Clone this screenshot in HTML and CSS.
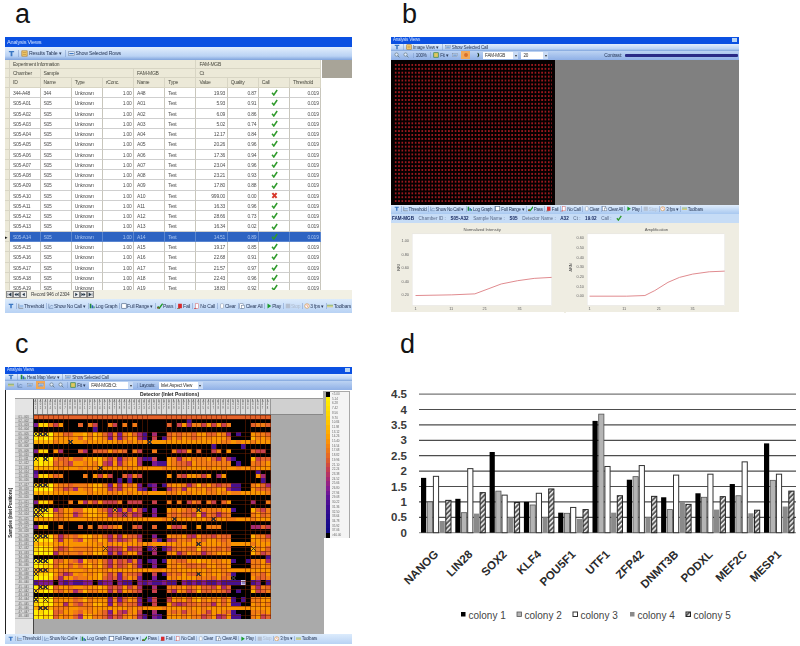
FILE: index.html
```html
<!DOCTYPE html>
<html lang="en">
<head>
<meta charset="utf-8">
<title>Figure panels</title>
<link rel="stylesheet" href="styles.css">
</head>
<body>
<svg class="defs" aria-hidden="true">
  <symbol id="i-t" viewBox="0 0 8 8"><path d="M1 1h6v1.6H5V7H3V2.6H1z" fill="#3b78c4"/></symbol>
  <symbol id="i-doc" viewBox="0 0 8 8"><rect x="1" y="1" width="6" height="6" fill="#f3d27a" stroke="#a86c18" stroke-width=".7"/><path d="M2 3h4M2 5h4" stroke="#a86c18" stroke-width=".6"/></symbol>
  <symbol id="i-show" viewBox="0 0 8 8"><rect x=".5" y="2" width="7" height="4" fill="#e8eef8" stroke="#6a7f9c" stroke-width=".6"/><rect x="1.5" y="3.4" width="5" height="1.4" fill="#3b78c4"/></symbol>
  <symbol id="i-thr" viewBox="0 0 8 8"><path d="M1 7V1M1 7h6" stroke="#555" stroke-width=".7" fill="none"/><path d="M2 4h5" stroke="#3b78c4" stroke-width=".8"/></symbol>
  <symbol id="i-nc" viewBox="0 0 8 8"><path d="M1 7V1M1 7h6" stroke="#4a6a98" stroke-width=".7" fill="none"/><path d="M2 6l2-3 3 1" stroke="#4a6a98" stroke-width=".6" fill="none"/></symbol>
  <symbol id="i-log" viewBox="0 0 8 8"><rect x="1" y="1" width="2.2" height="6" fill="#1f8a3c"/><rect x="3.6" y="3" width="2" height="4" fill="#2a62c0"/><rect x="6" y="4.5" width="1.4" height="2.5" fill="#1f8a3c"/></symbol>
  <symbol id="i-full" viewBox="0 0 8 8"><rect x="1" y="1" width="6" height="6" fill="#fff" stroke="#44597a" stroke-width=".8"/></symbol>
  <symbol id="i-pass" viewBox="0 0 8 8"><path d="M1 4.5L3 7l4.5-6" stroke="#1d9a22" stroke-width="1.8" fill="none"/><rect x="0" y="5.4" width="3" height="2" fill="#7a5a30"/></symbol>
  <symbol id="i-fail" viewBox="0 0 8 8"><rect x="1.5" y="1" width="5" height="6" fill="#d8282a"/><path d="M0 7.5h4" stroke="#7a5a30" stroke-width="1"/></symbol>
  <symbol id="i-nocall" viewBox="0 0 8 8"><rect x="2" y="1" width="4" height="6" fill="#fff" stroke="#d86a6a" stroke-width=".7"/><path d="M0 7.5h3" stroke="#c8302a" stroke-width="1"/></symbol>
  <symbol id="i-clear" viewBox="0 0 8 8"><rect x="2" y="1" width="4" height="6" rx="1" fill="#fff" stroke="#8a97aa" stroke-width=".7"/></symbol>
  <symbol id="i-clearall" viewBox="0 0 8 8"><rect x="1" y="1" width="4.5" height="6" fill="#fff" stroke="#6c7d95" stroke-width=".7"/><rect x="3.4" y="3" width="3.6" height="4" fill="#fff" stroke="#6c7d95" stroke-width=".7"/></symbol>
  <symbol id="i-play" viewBox="0 0 8 8"><path d="M2 .8L7 4 2 7.2z" fill="#1a9c2a"/></symbol>
  <symbol id="i-stop" viewBox="0 0 8 8"><rect x="1" y="1" width="6" height="6" fill="#b4bfd0"/></symbol>
  <symbol id="i-fps" viewBox="0 0 8 8"><circle cx="4" cy="4" r="3" fill="#fff" stroke="#d4862c" stroke-width=".8"/><path d="M4 2v2l1.4 1" stroke="#c8302a" stroke-width=".6" fill="none"/></symbol>
  <symbol id="i-bars" viewBox="0 0 8 8"><path d="M0 3h8" stroke="#8fb04a" stroke-width="1.2"/><path d="M0 5h8" stroke="#d8c860" stroke-width="1.2"/></symbol>
  <symbol id="i-check" viewBox="0 0 10 10"><path d="M1.5 5.4L4 8.5 8.8 1.4" stroke="#2f9a2c" stroke-width="2.2" fill="none"/></symbol>
  <symbol id="i-x" viewBox="0 0 10 10"><path d="M2 1.5l6 7M8 1.5l-6 7" stroke="#d8382a" stroke-width="2.8" fill="none"/></symbol>
  <symbol id="i-zoom" viewBox="0 0 8 8"><circle cx="3.4" cy="3.4" r="2.2" fill="#dfeafa" stroke="#566" stroke-width=".7"/><path d="M5 5l2.2 2.2" stroke="#566" stroke-width=".9"/></symbol>
  <symbol id="i-fit" viewBox="0 0 8 8"><rect x="1" y="1" width="6" height="6" fill="#e0c860" stroke="#2f7f3c" stroke-width=".9"/></symbol>
  <symbol id="i-sun" viewBox="0 0 8 8"><circle cx="4" cy="4" r="2.6" fill="#d8702a"/></symbol>
  <symbol id="i-moon" viewBox="0 0 8 8"><path d="M4 1a3 3 0 1 1 0 6 4 4 0 0 0 0-6z" fill="#1c3a20"/></symbol>
  <symbol id="i-first" viewBox="0 0 6 6"><path d="M1 1v4M5 1L2 3l3 2z" stroke="#234" stroke-width=".5" fill="#234"/></symbol>
  <symbol id="i-prev2" viewBox="0 0 6 6"><path d="M3 1L.5 3 3 5zM5.5 1L3 3l2.5 2z" fill="#234"/></symbol>
  <symbol id="i-prev" viewBox="0 0 6 6"><path d="M4.5 1L1.5 3l3 2z" fill="#234"/></symbol>
  <symbol id="i-next" viewBox="0 0 6 6"><path d="M1.5 1l3 2-3 2z" fill="#234"/></symbol>
  <symbol id="i-next2" viewBox="0 0 6 6"><path d="M.5 1L3 3 .5 5zM3 1l2.5 2L3 5z" fill="#234"/></symbol>
  <symbol id="i-last" viewBox="0 0 6 6"><path d="M5 1v4M1 1l3 2-3 2z" stroke="#234" stroke-width=".5" fill="#234"/></symbol>
</svg>

<main class="figure">
  <section class="panel panel-a">
    <div class="letter letter-a">a</div>
    <div class="win win-a">
      <div class="title"><span>Analysis Views</span></div>
      <div class="bar bar-top">
        <svg class="ico"><use href="#i-t"/></svg>
        <span class="tool"><svg class="ico"><use href="#i-doc"/></svg>Results Table ▾</span>
        <span class="tool"><svg class="ico"><use href="#i-show"/></svg>Show Selected Rows</span>
      </div>
      <div class="sheet-wrap">
        <div class="sheet" id="sheet"></div>
        <div class="sheet-side"></div>
      </div>
      <div class="nav">
        <svg class="navbtn"><use href="#i-first"/></svg><svg class="navbtn"><use href="#i-prev2"/></svg><svg class="navbtn"><use href="#i-prev"/></svg>
        <span class="navtext">Record 946 of 2304</span>
        <svg class="navbtn"><use href="#i-next"/></svg><svg class="navbtn"><use href="#i-next2"/></svg><svg class="navbtn"><use href="#i-last"/></svg>
      </div>
      <div class="bar playbar"></div>
    </div>
  </section>

  <section class="panel panel-b">
    <div class="letter letter-b">b</div>
    <div class="win win-b">
      <div class="title title-thin"><span>Analysis Views</span><i class="winbtn"></i></div>
      <div class="bar bar-top">
        <svg class="ico"><use href="#i-t"/></svg>
        <span class="tool"><svg class="ico"><use href="#i-doc"/></svg>Image View ▾</span>
        <span class="tool"><svg class="ico"><use href="#i-show"/></svg>Show Selected Call</span>
      </div>
      <div class="bar bar-sub">
        <svg class="ico"><use href="#i-zoom"/></svg>
        <svg class="ico"><use href="#i-zoom"/></svg>
        <span class="tool">100%</span>
        <span class="tool"><svg class="ico"><use href="#i-fit"/></svg>Fit ▾</span>
        <svg class="ico"><use href="#i-show"/></svg>
        <span class="active"><svg class="ico"><use href="#i-sun"/></svg></span>
        <svg class="ico"><use href="#i-moon"/></svg>
        <span class="combo combo-fam">FAM-MGB<b>▾</b></span>
        <span class="combo combo-num">20<b>▾</b></span>
        <span class="contrast">Contrast:<i class="slider"></i></span>
      </div>
      <div class="stage">
        <div class="chip"></div>
        <div class="chip-side"></div>
      </div>
      <div class="bar playbar"></div>
      <div class="infobar">
        <b>FAM-MGB</b><span>Chamber ID :</span><b>S05-A32</b><span>Sample Name :</span><b>S05</b><span>Detector Name :</span><b>A32</b><span>Ct :</span><b>19.02</b><span>Call :</span><svg class="ico-call"><use href="#i-check"/></svg>
      </div>
      <div class="plots">
        <svg class="plot" viewBox="0 0 516 270">
          <rect class="plot-area" x="60" y="33" width="423" height="217"/>
          <text class="plot-title" x="272" y="23">Normalized Intensity</text>
          <g class="plot-ticks">
            <text x="50" y="59">1.00</text><text x="50" y="100">0.80</text><text x="50" y="141">0.60</text><text x="50" y="182">0.40</text><text x="50" y="222">0.20</text>
          </g>
          <text class="plot-axis" transform="translate(22 135) rotate(-90)">NRI</text>
          <g class="plot-xt"><text x="70" y="264">1</text><text x="178" y="264">11</text><text x="280" y="264">21</text><text x="386" y="264">31</text></g>
          <polyline class="curve" points="70,220 180,218 250,215 290,200 330,185 380,175 430,168 483,165"/>
        </svg>
        <svg class="plot" viewBox="0 0 516 270">
          <rect class="plot-area" x="60" y="33" width="417" height="217"/>
          <text class="plot-title" x="270" y="23">Amplification</text>
          <g class="plot-ticks">
            <text x="50" y="48">0.60</text><text x="50" y="78">0.50</text><text x="50" y="108">0.40</text><text x="50" y="138">0.30</text><text x="50" y="167">0.20</text><text x="50" y="196">0.10</text><text x="50" y="226">0.00</text>
          </g>
          <text class="plot-axis" transform="translate(14 135) rotate(-90)">ΔRN</text>
          <g class="plot-xt"><text x="67" y="264">1</text><text x="172" y="264">11</text><text x="277" y="264">21</text><text x="380" y="264">31</text></g>
          <polyline class="curve" points="67,222 180,222 235,220 265,205 305,180 340,165 380,155 430,148 477,146"/>
        </svg>
      </div>
    </div>
  </section>

  <section class="panel panel-c">
    <div class="letter letter-c">c</div>
    <div class="win win-c">
      <div class="title title-thin"><span>Analysis Views</span><i class="winbtn"></i></div>
      <div class="bar bar-top">
        <svg class="ico"><use href="#i-t"/></svg>
        <span class="tool"><svg class="ico"><use href="#i-log"/></svg>Heat Map View ▾</span>
        <span class="tool"><svg class="ico"><use href="#i-show"/></svg>Show Selected Call</span>
      </div>
      <div class="bar bar-sub">
        <svg class="ico"><use href="#i-bars"/></svg>
        <svg class="ico"><use href="#i-nc"/></svg>
        <svg class="ico"><use href="#i-show"/></svg>
        <span class="active"><svg class="ico"><use href="#i-show"/></svg></span>
        <svg class="ico"><use href="#i-zoom"/></svg>
        <svg class="ico"><use href="#i-zoom"/></svg>
        <span class="tool"><svg class="ico"><use href="#i-fit"/></svg>Fit ▾</span>
        <span class="combo combo-heat">FAM-MGB:Ct<b>▾</b></span>
        <span class="tool">Layouts:</span>
        <span class="combo combo-heat">Inlet Aspect View<b>▾</b></span>
      </div>
      <div class="heatview">
        <div class="samples-col"><span>Samples (Inlet Positions)</span></div>
        <div class="heat-main">
          <div class="detector">Detector (Inlet Positions)</div>
          <div class="heat-body">
            <div class="row-labels" id="rowLabels"></div>
            <div class="heat-right">
              <div class="heat-head">
                <div class="col-labels" id="colLabels"></div>
                <div class="head-fill"></div>
              </div>
              <div class="heat-area">
                <div class="heat" id="heat"></div>
              </div>
            </div>
          </div>
        </div>
        <div class="legend-col"><div class="legend" id="legend"></div></div>
      </div>
      <div class="bar playbar"></div>
    </div>
  </section>

  <section class="panel panel-d">
    <div class="letter letter-d">d</div>
    <svg class="chart" id="chart" viewBox="391 367 409 279"></svg>
  </section>
</main>
<script src="script.js"></script>
</body>
</html>
```

FILE: styles.css
```css
* { box-sizing: border-box; }
html, body { margin: 0; padding: 0; background: #fff; }
body { width: 800px; height: 646px; overflow: hidden; font-family: "Liberation Sans", Arial, sans-serif; }
.defs { width: 0; height: 0; display: block; overflow: hidden; }

.figure { display: grid; grid-template-columns: 391px 409px; grid-template-rows: 330px 316px; width: 800px; height: 646px; }
.panel-a, .panel-c { padding-left: 5px; }

.letter { height: 37px; font-size: 27px; line-height: 28px; color: #141414; }
.letter-a, .letter-c { margin-left: 10px; }
.letter-b { margin-left: 11px; }
.letter-d { margin-left: 9px; }

.win { filter: blur(0.55px); font-family: "Liberation Sans", sans-serif; letter-spacing: -.2px; color: #333; background: #fff; }
.win-a { width: 347px; height: 275px; --fs: 5.2px; --ico: 7px; --pfs: 5px; --pico: 6px; }
.win-b { width: 348px; height: 275px; --fs: 4.6px; --ico: 6px; --pad: 36px; --pfs: 4.5px; --pico: 5.5px; }
.win-c { width: 347px; height: 275px; --fs: 4.6px; --ico: 6px; --pad: 35px; --pfs: 4.5px; --pico: 5.5px; }

.title { height: 10px; background: #0a50e2; color: #cfe0ff; font-size: 5.6px; line-height: 10px; padding-left: 2px; display: flex; justify-content: space-between; align-items: center; }
.title-thin { height: 6.5px; line-height: 6.5px; font-size: 4.5px; }
.winbtn { width: 5px; height: 4px; background: #b8d4f4; margin-right: 2px; display: block; }

.bar { display: flex; align-items: center; gap: 3px; padding-left: 3px; font-size: var(--fs); color: #2a3a5a; white-space: nowrap; }
.bar-top { height: 12.5px; background: linear-gradient(#e2eefc, #b9d2f4 70%, #7fa3dc); }
.win-b .bar-top, .win-c .bar-top { height: 7px; }
.bar-sub { height: 9.5px; background: linear-gradient(#bcd3f3, #8fb0e6); gap: 3.4px; }
.playbar { height: 14px; background: linear-gradient(#dcebfc, #b8d2f4); padding: 0 var(--pad, 1px) 0 3px; gap: 0; justify-content: space-between; font-size: var(--pfs); letter-spacing: -.22px; }
.win-b .playbar { height: 9px; background: linear-gradient(#e0edfc, #a8c8f0); }
.win-c .playbar { height: 10px; }
.tool { display: inline-flex; align-items: center; gap: 1px; padding-left: 2px; border-left: 1px solid rgba(120, 150, 200, .5); }
.playbar .tool { gap: .4px; padding-left: .6px; border-left-width: .5px; }
.tool.off { color: #b0bccd; }
.ico { width: var(--ico); height: var(--ico); flex: none; }
.playbar .ico { width: var(--pico); height: var(--pico); }

/* Panel a: results table */
.sheet-wrap { display: flex; height: 229.5px; overflow: hidden; margin-top: .5px; background: #fff; }
.sheet { width: 317px; display: grid; grid-template-columns: 5px 30.5px repeat(9, 31.2px); grid-template-rows: 9px 9px 10px; grid-auto-rows: 10.27px; font-size: 5px; line-height: 10px; align-content: start; letter-spacing: -.25px; }
.sheet-side { width: 30px; height: 17.5px; background: #a8a498; }
.cell { padding: 0 1.5px 0 3px; border-right: 1px solid #c8c6bc; border-bottom: 1px solid #cfcfcf; overflow: hidden; white-space: nowrap; color: #505050; }
.cell.num { text-align: right; }
.cell.call { display: flex; justify-content: center; align-items: center; }
.cell.call svg { width: 7px; height: 7px; }
.cell.hd { background: #ece9d8; color: #4a4a40; line-height: 9px; border-color: #d8d5c4; }
.cell.rh { background: #ece9d8; padding: 0; font-size: 5px; color: #111; border-color: #d8d5c4; }
.cell.span6 { grid-column: span 6; }
.cell.span4 { grid-column: span 4; }
.cell.span3 { grid-column: span 3; }
.cell.span2 { grid-column: span 2; }
.cell.sel { background: #2d63c2; color: #a8c4f0; border-color: #5a86d0; }

.nav { height: 9px; display: flex; align-items: center; padding-left: 1px; background: #f2f0e4; font-size: 4.8px; }
.navbtn { width: 7px; height: 7px; border: 1px solid #8a8a8a; background: #eee; flex: none; }
.navtext { width: 46px; padding-left: 4px; color: #444; white-space: nowrap; }

/* Panel b: chip image and plots */
.stage { display: flex; height: 144.5px; }
.chip { width: 164px; padding: 3px; background: radial-gradient(ellipse 1.5px .9px at center, #b01c22 55%, transparent 100%) content-box 0 0 / 3.33px 3.9px, #050000; }
.chip-side { flex: 1; background: #808080; }
.infobar { height: 9px; background: #c6dcf6; display: flex; align-items: center; gap: 4.6px; padding-left: 1px; font-size: 4.6px; letter-spacing: 0; color: #5a6a88; white-space: nowrap; }
.infobar b { color: #12245c; }
.ico-call { width: 6px; height: 6px; }
.plots { height: 90px; display: flex; gap: 2px; background: #efede2; }
.plot { flex: 1; width: 172px; height: 90px; display: block; border-bottom: 1px solid #fff; }
.plot-area { fill: #fff; stroke: #ddd; }
.plot-title { font-size: 13px; fill: #555; text-anchor: middle; }
.plot-ticks text { font-size: 12px; fill: #666; text-anchor: end; }
.plot-axis { font-size: 12px; fill: #444; text-anchor: middle; }
.plot-xt text { font-size: 12px; fill: #666; text-anchor: middle; }
.curve { fill: none; stroke: #e08a8e; stroke-width: 3; }

/* b toolbar widgets */
.active { background: #f0a858; width: 9px; height: 8px; display: inline-flex; align-items: center; justify-content: center; }
.combo { background: #fff; height: 7px; line-height: 7px; padding-left: 2px; position: relative; color: #333; font-size: 4.6px; }
.combo b { position: absolute; right: 0; top: 0; width: 5px; background: #c9dbf5; font-weight: normal; text-align: center; font-size: 4px; }
.combo-fam { width: 35px; }
.combo-num { width: 27px; }
.combo-heat { width: 44px; }
.contrast { margin-left: auto; display: flex; align-items: center; gap: 3px; padding-right: 1px; font-size: 4.8px; }
.slider { display: block; width: 113px; height: 2.5px; background: #2a2a86; border-radius: 1px; }

/* Panel c: heat map */
.heatview { height: 243.5px; display: flex; background: #aaa; border-left: 1px solid #222; }
.samples-col { width: 9px; background: #fff; display: flex; align-items: flex-end; justify-content: center; padding-bottom: 96px; }
.samples-col span { writing-mode: vertical-rl; transform: rotate(180deg); font-size: 4.6px; font-weight: bold; color: #222; white-space: nowrap; }
.heat-main { width: 309px; display: flex; flex-direction: column; }
.detector { height: 8.5px; background: #fff; font-size: 5px; font-weight: bold; line-height: 8.5px; text-align: center; color: #222; border-bottom: 1px solid #999; letter-spacing: 0; }
.heat-body { flex: 1; display: flex; }
.row-labels { width: 18.5px; background: #e4e4e4; padding-top: 16px; border-right: 1px solid #444; display: grid; grid-auto-rows: 4.25px; align-content: start; }
.row-labels span { font-size: 2.8px; line-height: 4.25px; color: #555; text-align: center; border-bottom: .5px solid #bbb; background: #d8d8d8; letter-spacing: 0; }
.heat-right { flex: 1; display: flex; flex-direction: column; }
.heat-head { height: 16px; display: flex; background: #d0d0d0; }
.col-labels { width: 237px; display: grid; grid-template-columns: repeat(48, 1fr); border-bottom: 1px solid #666; }
.col-labels span { font-size: 2.7px; line-height: 3.8px; text-align: center; color: #555; background: #dcdcdc; border-right: .5px solid #999; padding-top: 1px; overflow: hidden; letter-spacing: 0; }
.head-fill { flex: 1; border-bottom: 1px solid #888; }
.heat-area { flex: 1; background: #aaa; }
.heat { position: relative; width: 237px; height: 204px; display: grid; grid-template-columns: repeat(48, 1fr); grid-template-rows: repeat(48, 1fr); background: #000; }
.heat::after { content: ""; position: absolute; inset: 0; background-image: repeating-linear-gradient(90deg, transparent 0 4.1px, rgba(110, 30, 0, .55) 4.1px 4.9375px), repeating-linear-gradient(0deg, transparent 0 3.5px, rgba(110, 30, 0, .5) 3.5px 4.25px); }
.hc.mark { background-image: linear-gradient(45deg, transparent 42%, #333 42% 58%, transparent 58%), linear-gradient(-45deg, transparent 42%, #333 42% 58%, transparent 58%); }
.hc.pick { background: #8d84c4 !important; box-shadow: inset 0 0 0 .7px #dcd8f4; }
.legend-col { flex: 1; background: #fff; min-width: 0; }
.legend { background: #a8a8a8; margin-left: 1px; width: 25px; height: 147px; margin-top: 1px; display: grid; grid-auto-rows: 1fr; padding: 1px; box-shadow: -2px 0 0 #aaa; }
.legend-row { display: grid; grid-template-columns: 4px 1fr; font-size: 3px; line-height: 4.7px; color: #666; letter-spacing: 0; }
.legend-row span { background: #f4f4f4; padding-left: 2px; overflow: hidden; white-space: nowrap; }

/* Panel d: bar chart */
.chart { display: block; width: 409px; height: 279px; }
.grid-line { stroke: #4d4d4d; stroke-width: 1.2; }
.grid-line.top { stroke: #777; }
.grid-line.base { stroke: #999; }
.y-label { font-size: 11.5px; font-weight: bold; fill: #3a3a3a; text-anchor: end; }
.gene { font-size: 11.5px; font-weight: bold; fill: #2a2a2a; text-anchor: end; }
.legend-text { font-size: 10px; fill: #444; }
.c1 { fill: #000; }
.c2 { fill: #b4b4b4; stroke: #555; stroke-width: .8; }
.c3 { fill: #fff; stroke: #333; stroke-width: 1; }
.c4 { fill: #8a8a8a; }
.c5 { fill: url(#hatch); stroke: #222; stroke-width: 1; }
```

FILE: script.js
```js
// Toolbar shared by the three instrument windows.
var tools = [
  ['i-thr', 'Threshold'], ['i-nc', 'Show No Call ▾'], ['i-log', 'Log Graph'], ['i-full', 'Full Range ▾'],
  ['i-pass', 'Pass'], ['i-fail', 'Fail'], ['i-nocall', 'No Call'], ['i-clear', 'Clear'], ['i-clearall', 'Clear All'],
  ['i-play', 'Play'], ['i-stop', 'Stop', ' off'], ['i-fps', '3 fps ▾'], ['i-bars', 'Toolbars']
];
var toolHtml = '<svg class="ico"><use href="#i-t"/></svg>' + tools.map(function (t) {
  return '<span class="tool' + (t[2] || '') + '"><svg class="ico"><use href="#' + t[0] + '"/></svg>' + t[1] + '</span>';
}).join('');
document.querySelectorAll('.playbar').forEach(function (el) { el.innerHTML = toolHtml; });

// Panel a: results table.
var rows = [
  ['344-A48', '344', 'A48', '19.93', '0.87'], ['S05-A01', 'S05', 'A01', '5.93', '0.91'],
  ['S05-A02', 'S05', 'A02', '6.09', '0.86'], ['S05-A03', 'S05', 'A03', '5.02', '0.74'],
  ['S05-A04', 'S05', 'A04', '12.17', '0.84'], ['S05-A05', 'S05', 'A05', '20.26', '0.96'],
  ['S05-A06', 'S05', 'A06', '17.36', '0.94'], ['S05-A07', 'S05', 'A07', '23.04', '0.96'],
  ['S05-A08', 'S05', 'A08', '23.21', '0.93'], ['S05-A09', 'S05', 'A09', '17.80', '0.88'],
  ['S05-A10', 'S05', 'A10', '999.00', '0.00'], ['S05-A11', 'S05', 'A11', '16.33', '0.96'],
  ['S05-A12', 'S05', 'A12', '28.66', '0.73'], ['S05-A13', 'S05', 'A13', '16.34', '0.02'],
  ['S05-A14', 'S05', 'A14', '14.51', '0.89'], ['S05-A15', 'S05', 'A15', '19.17', '0.85'],
  ['S05-A16', 'S05', 'A16', '22.68', '0.91'], ['S05-A17', 'S05', 'A17', '21.57', '0.97'],
  ['S05-A18', 'S05', 'A18', '22.43', '0.96'], ['S05-A19', 'S05', 'A19', '18.83', '0.92']
];
function c(text, cls) { return '<div class="cell ' + (cls || '') + '">' + text + '</div>'; }
var h = c('', 'rh') + c('Experiment Information', 'hd span6') + c('FAM-MGB', 'hd span4');
h += c('', 'rh') + c('Chamber', 'hd') + c('Sample', 'hd span3') + c('FAM-MGB', 'hd span2') + c('Ct', 'hd span4');
h += c('', 'rh');
['ID', 'Name', 'Type', 'rConc.', 'Name', 'Type', 'Value', 'Quality', 'Call', 'Threshold'].forEach(function (t) { h += c(t, 'hd'); });
rows.forEach(function (r, i) {
  var s = i === 14 ? ' sel' : '';
  var icon = i === 10 ? 'i-x' : 'i-check';
  h += c(i === 14 ? '▸' : '', 'rh') + c(r[0], s) + c(r[1], s) + c('Unknown', s) + c('1.00', 'num' + s) + c(r[2], s) + c('Test', s) +
    c(r[3], 'num' + s) + c(r[4], 'num' + s) + c('<svg><use href="#' + icon + '"/></svg>', 'call' + s) + c('0.019', 'num' + s);
});
document.getElementById('sheet').innerHTML = h;

// Panel c: heat map.
var palette = ['#ffee00', '#ffd400', '#ffb000', '#f99400', '#f27c14', '#e5632a', '#c9414e', '#a62a72', '#7a1a92', '#46108e', '#000000'];
var rowTypes = 'AKBKCCDKBKCCDKBKCCDKBKCCDKBKCCDCCKCCDCCPCCKCCDCC';
var blackCols = { 22: 1, 23: 1, 25: 1, 26: 1, 40: 1, 41: 1, 42: 1, 43: 1 };
var purpleCols = { 15: 1, 17: 1, 21: 1, 24: 1 };
var warmCols = { 10: 1, 11: 1, 12: 1, 13: 1, 33: 1, 44: 1 };
var marks = { '4,0': 1, '4,1': 1, '4,2': 1, '6,7': 1, '6,23': 1, '10,0': 1, '10,2': 1, '12,13': 1, '16,0': 1, '16,1': 1, '16,2': 1,
  '22,0': 1, '22,1': 1, '22,2': 1, '23,0': 1, '23,1': 1, '22,16': 1, '23,18': 1, '24,28': 1, '22,33': 1, '24,36': 1,
  '28,0': 1, '28,1': 1, '28,2': 1, '29,0': 1, '30,33': 1, '31,14': 1, '31,24': 1, '31,44': 1, '34,0': 1, '34,1': 1, '34,2': 1,
  '36,0': 1, '36,1': 1, '36,2': 1, '37,0': 1, '37,33': 1, '38,40': 1, '40,1': 1, '40,2': 1, '41,0': 1, '43,0': 1, '43,2': 1, '45,1': 1, '45,2': 1 };
function noise(r, k) { var v = Math.sin(r * 12.9898 + k * 78.233) * 43758.5453; return v - Math.floor(v); }
function heatLevel(r, k) {
  var t = rowTypes[r], n = noise(r, k);
  if (t === 'K') return n > .985 ? 9 : 10;
  if (t === 'A') return 5;
  if (t === 'D') return k < 4 ? 2 : 3 + (n > .75 ? 1 : 0);
  if (t === 'P') return n > .5 ? 9 : (n > .25 ? 8 : 10);
  if (t === 'B') {
    if (k < 3) return k === 0 ? 8 : 1;
    if (blackCols[k] || k === 6 || k === 8 || n > .75) return 10;
    return 3 + Math.floor(n * 6);
  }
  if (k < 4) return Math.floor(n * 1.6);
  if (blackCols[k]) return n > .2 ? 10 : 9;
  if (purpleCols[k]) return 6 + Math.floor(n * 3);
  if (warmCols[k]) return 2 + Math.floor(n * 3);
  if (n > .94) return 7;
  return 3 + Math.floor(n * 3.4);
}
var hm = '';
for (var r = 0; r < 48; r++) {
  for (var k = 0; k < 48; k++) {
    var cls = 'hc' + (marks[r + ',' + k] ? ' mark' : '') + (r === 39 && k === 42 ? ' pick' : '');
    hm += '<div class="' + cls + '" style="background-color:' + palette[heatLevel(r, k)] + '"></div>';
  }
}
document.getElementById('heat').innerHTML = hm;

var labels = '', cols = '';
for (var i = 1; i <= 48; i++) {
  var p = (i < 10 ? '0' : '') + i;
  labels += '<span>' + p + ' - 0' + p + '</span>';
  cols += '<span>A<br>' + p[0] + '<br>' + p[1] + '</span>';
}
document.getElementById('rowLabels').innerHTML = labels;
document.getElementById('colLabels').innerHTML = cols;

var ramp = ['#000000', '#ffee00', '#ffe800', '#ffe000', '#ffd800', '#ffd000', '#ffc400', '#ffb800', '#ffac00', '#ffa000', '#fb9208', '#f58410',
  '#ee7818', '#e66a24', '#dc5c30', '#d04c40', '#c43e52', '#b63464', '#a62a74', '#962284', '#841c92', '#701696', '#5c1296', '#4c0e94', '#3e0c92',
  '#300a90', '#260a8e', '#1c0a8c', '#160a8a', '#100888', '#000000'];
var leg = '';
ramp.forEach(function (col, idx) {
  var v = idx === 0 ? '&lt;5.00' : idx === ramp.length - 1 ? '&gt;40.00' : (4 + idx * 1.14).toFixed(2);
  leg += '<div class="legend-row"><i style="background:' + col + '"></i><span>' + v + '</span></div>';
});
document.getElementById('legend').innerHTML = leg;

// Panel d: grouped bar chart.
var genes = [
  ['NANOG', [1.78, 1.0, 1.83, 0.38, 1.05]], ['LIN28', [1.1, 0.65, 2.08, 0.62, 1.3]], ['SOX2', [2.62, 1.35, 1.22, 0.5, 0.98]],
  ['KLF4', [1.0, 0.9, 1.28, 0.5, 1.42]], ['POU5F1', [0.65, 0.63, 0.82, 0.45, 0.75]], ['UTF1', [3.63, 3.85, 2.15, 0.65, 1.2]],
  ['ZFP42', [1.72, 1.82, 2.18, 0.5, 1.18]], ['DNMT3B', [1.15, 0.75, 1.87, 1.0, 0.92]], ['PODXL', [1.28, 1.15, 1.9, 0.75, 1.17]],
  ['MEF2C', [1.58, 1.2, 2.3, 0.63, 0.73]], ['MESP1', [2.9, 1.7, 1.9, 0.85, 1.35]]
];
var y0 = 532.7, unit = 30.8, svg = '<defs><pattern id="hatch" width="3.4" height="3.4" patternUnits="userSpaceOnUse" patternTransform="rotate(-45)"><rect width="3.4" height="3.4" fill="#5a5a5a"/><rect width="3.4" height="1.5" fill="#eee"/></pattern></defs>';
for (var g = 0; g <= 9; g++) {
  var y = y0 - g * 0.5 * unit;
  var name = g === 9 ? ' top' : g === 0 ? ' base' : '';
  svg += '<line class="grid-line' + name + '" x1="419" x2="796" y1="' + y + '" y2="' + y + '"/>';
  svg += '<text class="y-label" x="407" y="' + (y + 4) + '">' + (g * 0.5) + '</text>';
}
genes.forEach(function (gene, gi) {
  var gx = 421 + gi * 34.3;
  gene[1].forEach(function (v, b) {
    svg += '<rect class="c' + (b + 1) + '" x="' + (gx + b * 6.2) + '" y="' + (y0 - v * unit) + '" width="5.2" height="' + (v * unit) + '"/>';
  });
  var ex = 439 + gi * 34.3;
  svg += '<text class="gene" transform="translate(' + ex + ' 555) rotate(-45)">' + gene[0] + '</text>';
});
[461, 517, 573, 630, 686].forEach(function (x, i) {
  svg += '<rect class="c' + (i + 1) + '" x="' + x + '" y="612" width="4.5" height="4.5"/>';
  svg += '<text class="legend-text" x="' + (x + 7.5) + '" y="618.5">colony ' + (i + 1) + '</text>';
});
document.getElementById('chart').innerHTML = svg;
```
